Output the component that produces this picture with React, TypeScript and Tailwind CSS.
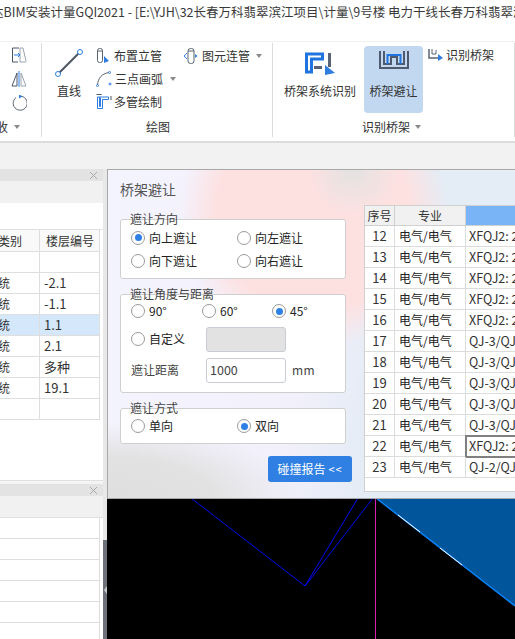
import React from "react";

const FONT = "font-['Noto_Sans_CJK_SC','Noto_Sans',sans-serif]";

function Caret() {
  return <span className="inline-block w-0 h-0 border-x-[3.5px] border-x-transparent border-t-[4px] border-t-[#8a8a8a]" />;
}

function Radio({ on }: { on?: boolean }) {
  return (
    <span className="w-[14px] h-[14px] rounded-full border border-[#9a9a9a] bg-white flex items-center justify-center shrink-0">
      {on && <span className="w-[7px] h-[7px] rounded-full bg-[#2f80e5]" />}
    </span>
  );
}

function Opt({ label, on, w }: { label: string; on?: boolean; w: string }) {
  return (
    <div className={`flex items-center gap-[4px] ${w} text-[12px] text-[#222]`}>
      <Radio on={on} />
      <span>{label}</span>
    </div>
  );
}

function Group({ title, h, children }: { title: string; h: string; children: React.ReactNode }) {
  return (
    <div className={`relative ${h} border border-[#cfcfcf] rounded-[3px] bg-white pl-[10px]`}>
      <span className="absolute left-[9px] -top-[9px] text-[12px] leading-[16px] text-[#444]">{title}</span>
      {children}
    </div>
  );
}

function Close() {
  return (
    <svg width="9" height="9" viewBox="0 0 9 9" fill="none">
      <path d="M1 1l7 7M8 1L1 8" stroke="#a8a8a8" />
    </svg>
  );
}

const leftRows = ["", "-2.1", "-1.1", "1.1", "2.1", "多种", "19.1", ""];
const rows: [number, string][] = [
  [12, "XFQJ2: 2.5"], [13, "XFQJ2: 2.5"], [14, "XFQJ2: 2.5"], [15, "XFQJ2: 2.5"], [16, "XFQJ2: 2.5"],
  [17, "QJ-3/QJ-3"], [18, "QJ-3/QJ-3"], [19, "QJ-3/QJ-3"], [20, "QJ-3/QJ-3"], [21, "QJ-3/QJ-3"],
  [22, "XFQJ2: 2.5"], [23, "QJ-2/QJ-3"],
];

function IcoMove() {
  return (
    <svg width="16" height="16" viewBox="0 0 16 16" fill="none">
      <path d="M8 1H1.5v14H7" stroke="#4a5568" />
      <path d="M9 1h3l3 13c.2.8-.3 1-1 1H9z" stroke="#9aa3ad" />
      <path d="M3 8h6M7 6l2 2-2 2" stroke="#2f7de1" />
    </svg>
  );
}
function IcoMirror() {
  return (
    <svg width="16" height="16" viewBox="0 0 16 16" fill="none">
      <path d="M6 2L1 15h5z" stroke="#4a5568" />
      <path d="M10 2l5 13h-5z" stroke="#9aa3ad" />
      <path d="M8 0v16" stroke="#2f7de1" />
    </svg>
  );
}
function IcoRotate() {
  return (
    <svg width="16" height="16" viewBox="0 0 16 16" fill="none">
      <path d="M5 2.6A7 7 0 1 0 9 1.2" stroke="#5a6470" />
      <path d="M8 -0.5l3.5 2-3.5 2z" fill="#2f7de1" />
    </svg>
  );
}
function IcoLine() {
  return (
    <svg width="30" height="30" viewBox="0 0 30 30" fill="none">
      <path d="M5 25L25 5" stroke="#4d5564" strokeWidth="2" />
      <circle cx="4" cy="26" r="2.5" fill="#fff" stroke="#2f7de1" />
      <circle cx="26" cy="4" r="2.5" fill="#fff" stroke="#2f7de1" />
    </svg>
  );
}
function IcoRiser() {
  return (
    <svg width="16" height="16" viewBox="0 0 16 16" fill="none">
      <rect x="1.5" y="0.5" width="5" height="14" rx="2" stroke="#5a6470" />
      <path d="M1.5 3h5" stroke="#5a6470" />
      <path d="M8 8l5 5-5 2z" fill="#2f7de1" />
    </svg>
  );
}
function IcoArc() {
  return (
    <svg width="16" height="16" viewBox="0 0 16 16" fill="none">
      <path d="M1.5 14C2 7 6 2.5 13 1.5" stroke="#5a6470" />
      <circle cx="1.5" cy="14.5" r="1" fill="#fff" stroke="#2f7de1" />
      <circle cx="13.5" cy="1.5" r="1" fill="#fff" stroke="#2f7de1" />
      <circle cx="14" cy="13" r="1" fill="#fff" stroke="#2f7de1" />
    </svg>
  );
}
function IcoMulti() {
  return (
    <svg width="16" height="16" viewBox="0 0 16 16" fill="none">
      <path d="M0.5 0.5h5" stroke="#4a5568" />
      <path d="M1.5 3v11.5h5V5.5h6V3z" stroke="#2f7de1" />
      <path d="M3.5 3v9.5h1V3.5" stroke="#2f7de1" />
      <path d="M15 2v4" stroke="#4a5568" />
    </svg>
  );
}
function IcoConnect() {
  return (
    <svg width="16" height="16" viewBox="0 0 16 16" fill="none">
      <rect x="5" y="0.5" width="6" height="15" rx="2.5" stroke="#5a6470" />
      <path d="M5 3h6" stroke="#5a6470" />
      <path d="M4 5L1 8l3 3" stroke="#2f7de1" />
      <path d="M12 6l2.5 2L12 10z" fill="#2f7de1" />
    </svg>
  );
}
function IcoTraySys() {
  return (
    <svg width="30" height="24" viewBox="0 0 30 24" fill="none">
      <path d="M1.5 20V2h16v5H6.5v13z" stroke="#1f74e0" strokeWidth="3" />
      <path d="M9 17h8v-3H9z" fill="#5a6375" />
      <path d="M23 1v14h3V1z" fill="#5a6375" />
      <path d="M20 13l10 8-10 2z" fill="#2f7de1" />
    </svg>
  );
}
function IcoTrayAvoid() {
  return (
    <svg width="30" height="19" viewBox="0 0 30 19" fill="none">
      <path d="M1 0v17h28V0" stroke="#4f5a6e" strokeWidth="2" fill="none" />
      <path d="M5 0v13h7V6h6v7h7V0" stroke="#4f5a6e" strokeWidth="2" fill="none" />
      <path d="M8.5 13V4h13v9" stroke="#1f74e0" strokeWidth="2" fill="none" />
    </svg>
  );
}
function IcoTraySmall() {
  return (
    <svg width="15" height="13" viewBox="0 0 15 13" fill="none">
      <path d="M1 0v9h9" stroke="#5a6375" strokeWidth="1.5" />
      <path d="M4 0v5h4V1" stroke="#5a6375" strokeWidth="1" />
      <path d="M10 5l5 4-5 3z" fill="#2f7de1" />
    </svg>
  );
}

export default function App() {
  return (
    <div className={`relative w-[515px] h-[639px] overflow-hidden bg-white flex flex-col text-[12px] text-[#333] ${FONT}`}>
      {/* title */}
      <div className="h-[41px] shrink-0 pt-[3px] text-[12.5px] leading-[18px] text-[#3a3a3a] whitespace-nowrap -ml-[9px]">
        达BIM安装计量GQI2021 - [E:\YJH\32长春万科翡翠滨江项目\计量\9号楼 电力干线长春万科翡翠滨江
      </div>

      {/* ribbon */}
      <div className="h-[102px] shrink-0 border-b-2 border-[#dcdcdc] flex items-start border-t border-t-[#f0f0f0]">
        <div className="w-[42px] h-[94px] mt-[1px] border-r border-[#dcdcdc] flex flex-col shrink-0">
          <div className="flex-1 flex flex-col gap-[8px] pl-[11px] pt-[4px]">
            <IcoMove />
            <IcoMirror />
            <IcoRotate />
          </div>
          <div className="h-[20px] flex items-center gap-[6px] -ml-[4px]">
            <span>收</span>
            <Caret />
          </div>
        </div>
        <div className="w-[231px] h-[94px] mt-[1px] border-r border-[#dcdcdc] flex flex-col shrink-0">
          <div className="flex-1 flex items-start">
            <div className="w-[54px] flex flex-col items-center pt-[5px]">
              <IcoLine />
              <span className="mt-[4px] leading-[18px]">直线</span>
            </div>
            <div className="w-[87px] flex flex-col pt-[1px]">
              <div className="h-[23px] flex items-center gap-[2px]"><IcoRiser /><span>布置立管</span></div>
              <div className="h-[23px] flex items-center gap-[3px]"><IcoArc /><span>三点画弧</span><span className="ml-[4px] flex"><Caret /></span></div>
              <div className="h-[23px] flex items-center gap-[2px]"><IcoMulti /><span>多管绘制</span></div>
            </div>
            <div className="flex items-center h-[23px] mt-[1px] gap-[3px]">
              <IcoConnect /><span>图元连管</span><span className="ml-[3px] flex"><Caret /></span>
            </div>
          </div>
          <div className="h-[20px] flex items-center justify-center pl-[2px]">绘图</div>
        </div>
        <div className="flex-1 h-[94px] mt-[1px] border-r border-[#dcdcdc] flex flex-col">
          <div className="flex-1 flex items-start">
            <div className="w-[91px] flex flex-col items-center pt-[9px] pl-[3px]">
              <IcoTraySys />
              <span className="mt-[6px] leading-[18px] whitespace-nowrap">桥架系统识别</span>
            </div>
            <div className="w-[59px] h-[67px] mt-[3px] rounded-[4px] bg-[#c2d8f0] flex flex-col items-center pt-[5px]">
              <IcoTrayAvoid />
              <span className="mt-[12px] leading-[18px] whitespace-nowrap">桥架避让</span>
            </div>
            <div className="flex items-center gap-[3px] pl-[5px] mt-[3px] h-[18px] whitespace-nowrap">
              <IcoTraySmall /><span>识别桥架</span>
            </div>
          </div>
          <div className="h-[20px] flex items-center gap-[5px] pl-[89px]">
            <span>识别桥架</span>
            <Caret />
          </div>
        </div>
      </div>

      {/* strip */}
      <div className="h-[26px] shrink-0 bg-[#f2f2f2]" />

      {/* main */}
      <div className="flex-1 flex min-h-0">
        <div className="w-[103px] shrink-0 flex flex-col bg-white overflow-hidden">
          <div className="h-[12px] bg-[#e3e3e3] flex justify-end items-center pr-[5px] shrink-0">
            <Close />
          </div>
          <div className="h-[22px] bg-[#f1f1f1] shrink-0" />
          <div className="h-[27px] shrink-0 border-b border-[#e0e0e0]" />
          <div className="w-[100px] border-r border-[#dedede]">
            <div className="h-[22px] flex border-b border-[#dedede] bg-[#f9f9f9]">
              <div className="w-[40px] border-r border-[#dedede] flex items-center justify-end pr-[17px] whitespace-nowrap">类别</div>
              <div className="flex-1 flex items-center justify-center pl-[1px]">楼层编号</div>
            </div>
            {leftRows.map((r, i) => (
              <div key={i} className={`h-[21px] flex border-b border-[#dedede] ${i === 3 ? "bg-[#d5e8fb]" : ""}`}>
                <div className="w-[40px] border-r border-[#dedede] flex items-center overflow-hidden">
                  {i > 0 && i < 7 ? <span className="-ml-[2px]">统</span> : null}
                </div>
                <div className="flex-1 flex items-center pl-[4px] text-[13px]">{r}</div>
              </div>
            ))}
          </div>
          <div className="h-[61px] shrink-0 border-b border-[#e0e0e0]" />
          <div className="h-[3px] shrink-0 bg-[#f4f4f4]" />
          <div className="h-[12px] bg-[#e3e3e3] flex justify-end items-center pr-[5px] shrink-0">
            <Close />
          </div>
          <div className="h-[22px] bg-[#f1f1f1] border-b border-[#e0e0e0] shrink-0" />
          <div className="w-[100px] border-r border-[#dedede]">
            {[0, 1, 2, 3, 4, 5].map((i) => (
              <div key={i} className="h-[21px] border-b border-[#dedede]" />
            ))}
          </div>
        </div>

        {/* splitter */}
        <div className="w-[4px] shrink-0 flex flex-col bg-[#e8e8e8]">
          <div className="h-[371px] shrink-0" />
          <div className="flex-1 bg-[#6d7278] flex items-center justify-center">
            <span className="w-0 h-0 border-y-[4px] border-y-transparent border-r-[3px] border-r-[#c8c8c8]" />
          </div>
        </div>

        {/* canvas */}
        <div className="relative flex-1 bg-black">
          <svg className="absolute left-0 top-0" width="408" height="470" viewBox="107 169 408 470" fill="none">
            <path d="M376 498L515 606V498z" fill="#00559b" />
            <path d="M376 498L515 606" stroke="#0a84ff" strokeWidth="1.5" />
            <path d="M398 515L420 532M440 548L462 565" stroke="#ffffff" />
            <path d="M191 498L305 586L358 498M305 586L373 498" stroke="#0000f0" />
            <path d="M375.5 498V639" stroke="#d61fb0" />
          </svg>

          {/* dialog */}
          <div className="absolute left-0 top-0 w-[440px] h-[330px] border border-[#a8a8a8] flex bg-[radial-gradient(ellipse_190px_75px_at_0%_100%,#dfdfdf_0,#e2e2e2_55%,rgba(226,226,226,0)_100%),radial-gradient(circle_at_56%_0%,rgba(226,226,226,0.95)_0,rgba(226,226,226,0)_45px),radial-gradient(ellipse_135px_135px_at_205px_45px,#fde1e1_0,#fde1e1_72%,rgba(253,225,225,0)_100%),linear-gradient(100deg,#f4f4ff_0%,#f2f0fb_45%,#e4ecf5_62%,#e4ecf5_100%)]">
            <div className="w-[257px] shrink-0 flex flex-col pl-[12px] pr-[19px]">
              <div className="h-[38px] pt-[9px] text-[14px] leading-[20px] text-[#555]">桥架避让</div>
              <div className="mt-[11px]" />
              <Group title="遮让方向" h="h-[60px]">
                <div className="flex h-[23px] mt-[6px] items-center">
                  <Opt label="向上遮让" on w="w-[106px]" />
                  <Opt label="向左遮让" w="w-[100px]" />
                </div>
                <div className="flex h-[23px] items-center">
                  <Opt label="向下遮让" w="w-[106px]" />
                  <Opt label="向右遮让" w="w-[100px]" />
                </div>
              </Group>
              <div className="h-[15px] shrink-0" />
              <Group title="遮让角度与距离" h="h-[99px]">
                <div className="flex h-[22px] mt-[5px] items-center">
                  <Opt label="90°" w="w-[71px]" />
                  <Opt label="60°" w="w-[70px]" />
                  <Opt label="45°" on w="w-[60px]" />
                </div>
                <div className="flex h-[26px] mt-[4px] items-center">
                  <Opt label="自定义" w="w-[75px]" />
                  <div className="w-[80px] h-[25px] rounded-[3px] border border-[#c8ccd4] bg-[#e2e2e2]" />
                </div>
                <div className="flex h-[26px] mt-[5px] items-center">
                  <span className="w-[75px] text-[#444]">遮让距离</span>
                  <div className="w-[80px] h-[25px] rounded-[3px] border border-[#c8ccd4] bg-white pl-[3px] flex items-center text-[#444] text-[12.5px]">1000</div>
                  <span className="ml-[6px] text-[#444] tracking-[0.5px]">mm</span>
                </div>
              </Group>
              <div className="h-[15px] shrink-0" />
              <Group title="遮让方式" h="h-[36px]">
                <div className="flex h-[34px] items-center">
                  <Opt label="单向" w="w-[106px]" />
                  <Opt label="双向" on w="w-[100px]" />
                </div>
              </Group>
              <div className="flex justify-end mt-[12px] -mr-[6px]">
                <div className="w-[84px] h-[26px] rounded-[3px] bg-[#2f80e2] text-white flex items-center justify-center gap-[3px]">
                  <span>碰撞报告</span>
                  <span className="text-[11px] tracking-[1px]">&lt;&lt;</span>
                </div>
              </div>
            </div>

            <div className="flex-1 mt-[35px] mb-[6px] bg-white border border-[#d0d0d0] -ml-[1px]">
              <div className="grid grid-cols-[30px_71px_1fr]">
                <div className="h-[20px] bg-[#f1f1f1] border-r border-b border-[#d0d0d0] flex items-center justify-center whitespace-nowrap">序号</div>
                <div className="h-[20px] bg-[#f1f1f1] border-r border-b border-[#d0d0d0] flex items-center justify-center">专业</div>
                <div className="h-[20px] bg-[#79b4f6] border-b border-[#d0d0d0]" />
                {rows.map(([n, t]) => (
                  <React.Fragment key={n}>
                    <div className="h-[21px] border-r border-b border-[#dcdcdc] flex items-center justify-center text-[13px]">{n}</div>
                    <div className="h-[21px] border-r border-b border-[#dcdcdc] flex items-center pl-[4px] whitespace-nowrap text-[#222]">电气/电气</div>
                    <div className={`h-[21px] border-b border-[#dcdcdc] flex items-center pl-[3px] whitespace-nowrap overflow-hidden text-[12.5px] ${n === 22 ? "outline-2 -outline-offset-1 outline-[#808080]" : ""}`}>{t}</div>
                  </React.Fragment>
                ))}
              </div>
            </div>
          </div>
        </div>
      </div>
    </div>
  );
}
